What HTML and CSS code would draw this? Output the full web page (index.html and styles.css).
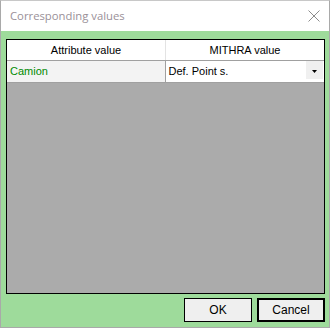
FILE: index.html
```html
<!DOCTYPE html>
<html lang="en">
<head>
    <meta charset="UTF-8">
    <title>Corresponding values</title>
    <link rel="stylesheet" href="styles.css">
</head>
<body>
    <div class="window">
        <div class="titlebar">
            <span class="title">Corresponding values</span>
            <svg class="close" width="12" height="12" viewBox="0 0 12 12">
                <path d="M0.5 0.5 L11.5 11.5 M11.5 0.5 L0.5 11.5" stroke="#8c8c8c" stroke-width="1" fill="none"/>
            </svg>
        </div>
        <div class="content">
            <div class="grid">
                <div class="row head">
                    <div class="cell">Attribute value</div>
                    <div class="cell">MITHRA value</div>
                </div>
                <div class="row data">
                    <div class="cell attr">Camion</div>
                    <div class="cell combo">
                        <span>Def. Point s.</span>
                        <div class="drop"><svg width="5" height="3" viewBox="0 0 5 3"><path d="M0 0 H5 L2.5 3 Z" fill="#000"/></svg></div>
                    </div>
                </div>
            </div>
            <div class="buttons">
                <div class="btn">OK</div>
                <div class="btn default">Cancel</div>
            </div>
        </div>
    </div>
</body>
</html>
```

FILE: styles.css
```css
*{
    margin:0;
    padding:0;
    box-sizing:border-box;
}
body{
    font-family:"Liberation Sans", Arial, sans-serif;
    font-size:11px;
    background:#fff;
}
.window{
    width:330px;
    height:328px;
    border:1px solid #a9a9a9;
    border-top-color:#c8c8c8;
    display:flex;
    flex-direction:column;
}
.titlebar{
    height:30px;
    background:#fff;
    display:flex;
    align-items:center;
    justify-content:space-between;
    padding:0 9px 0 9px;
}
.title{
    font-family:"Open Sans", "Noto Sans", sans-serif;
    font-size:11.3px;
    color:#9a9098;
    margin-top:-1px;
}
.close{
    display:block;
    margin-top:-1px;
}
.content{
    flex:1;
    background:#9edb9b;
    display:flex;
    flex-direction:column;
    padding:8px 4px 5px 5px;
    gap:4px;
}
.grid{
    flex:1;
    border:1px solid #000;
    background:#ababab;
}
.row{
    display:flex;
}
.head{
    height:21px;
    background:#fff;
    border-bottom:1px solid #a0a0a0;
}
.head .cell{
    flex:1;
    text-align:center;
    line-height:20px;
    color:#000;
}
.head .cell:first-child{
    border-right:1px solid #e3e3e3;
}
.data{
    height:22px;
    border-bottom:1px solid #a0a0a0;
}
.data .cell{
    flex:1;
    line-height:21px;
    padding-left:3px;
}
.attr{
    background:#f3f3f3;
    color:#008a00;
    border-right:1px solid #a0a0a0;
}
.combo{
    background:#fff;
    color:#000;
    display:flex;
    justify-content:space-between;
    padding-right:1px;
}
.drop{
    width:17px;
    height:18px;
    background:#f0f0f0;
    display:flex;
    align-items:center;
    justify-content:center;
    padding-top:3px;
}
.drop svg{
    display:block;
}
.buttons{
    height:24px;
    display:flex;
    justify-content:flex-end;
    gap:5px;
}
.btn{
    width:68px;
    height:24px;
    border:1px solid #000;
    background:#efefef;
    font-size:12px;
    text-align:center;
    line-height:22px;
    color:#000;
}
.btn.default{
    border-width:2px;
    line-height:20px;
}
```
